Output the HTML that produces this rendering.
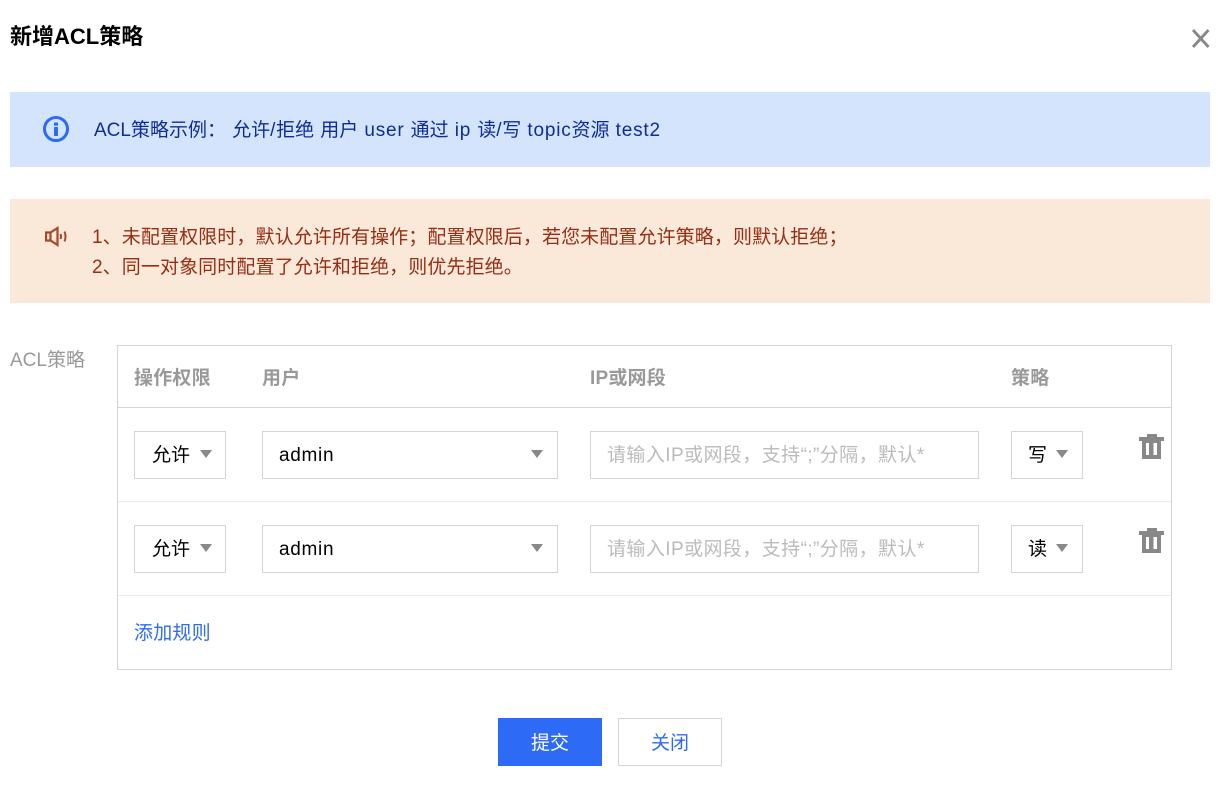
<!DOCTYPE html>
<html lang="zh"><head><meta charset="utf-8"><style>
html,body{margin:0;padding:0;background:#fff}
body{width:1230px;height:786px;position:relative;overflow:hidden;font-family:"Liberation Sans","Noto Sans CJK SC",sans-serif;font-size:19px;color:#000}
.a{position:absolute;white-space:nowrap}
.b{position:absolute;box-sizing:border-box;border:1px solid #cfd5de;background:#fff;height:48px}
.t{position:absolute;top:12.500px;line-height:22px;white-space:nowrap}
.p{letter-spacing:.42px}
.m{letter-spacing:.7px}
.c{position:absolute;top:18px;width:0;height:0;border-left:6.5px solid transparent;border-right:6.5px solid transparent;border-top:8px solid #888}
.h{position:absolute;top:368px;line-height:22px;font-weight:bold;color:#999;font-size:19px;white-space:nowrap;letter-spacing:.2px}
.l{position:absolute;background:#cfd5de}
.z{letter-spacing:0}
</style></head><body>
<div class="a" style="left:10px;top:24px;font-size:22px;font-weight:bold;line-height:26px">新增ACL策略</div>
<svg class="a" style="left:1190px;top:28px" width="21" height="21" viewBox="0 0 21 21"><path d="M3 2L18.500 19M18.500 2L3 19" stroke="#888" stroke-width="2.800"/></svg>

<div class="a" style="left:10px;top:92px;width:1200px;height:75px;background:#d5e4fd"></div>
<svg class="a" style="left:43px;top:116px" width="26" height="26" viewBox="0 0 26 26"><circle cx="13" cy="13" r="11.500" fill="none" stroke="#2d6bf6" stroke-width="3"/><rect x="11" y="6.500" width="4" height="3.200" fill="#2d6bf6"/><rect x="11" y="11" width="4" height="9" fill="#2d6bf6"/></svg>
<div class="a" style="left:94px;top:120px;line-height:22px;color:#0d2d96;font-size:19px;letter-spacing:.8px"><span class="z">ACL策略示例：</span> <span class="z">允许</span>/<span class="z">拒绝</span> <span class="z">用户</span> user <span class="z">通过</span> ip <span class="z">读</span>/<span class="z">写</span> topic<span class="z">资源</span> test2</div>

<div class="a" style="left:10px;top:199px;width:1200px;height:104px;background:#fae9d9"></div>
<svg class="a" style="left:45px;top:226px" width="24" height="21" viewBox="0 0 24 21"><path d="M1 6.500H5.500L12.500 2V19L5.500 14.500H1ZM5.500 6.500V14.500" fill="none" stroke="#a4492b" stroke-width="2.200"/><path d="M15.500 8Q16.500 10.500 15.500 13M19.500 5.500Q21.500 10.500 19.500 15.500" fill="none" stroke="#a4492b" stroke-width="2"/></svg>
<div class="a" style="left:92px;top:223px;line-height:30px;color:#972d14;font-size:19px;letter-spacing:.1px">1、未配置权限时，默认允许所有操作；配置权限后，若您未配置允许策略，则默认拒绝；<br>2、同一对象同时配置了允许和拒绝，则优先拒绝。</div>

<div class="a" style="left:10px;top:350px;line-height:22px;color:#999">ACL策略</div>
<div class="a" style="left:117px;top:345px;width:1055px;height:325px;box-sizing:border-box;border:1px solid #cfd5de"></div>
<div class="h" style="left:134px">操作权限</div>
<div class="h" style="left:262px">用户</div>
<div class="h" style="left:590px">IP或网段</div>
<div class="h" style="left:1011px">策略</div>
<div class="l" style="left:118px;top:407px;width:1053px;height:1px"></div>
<div class="l" style="left:118px;top:501px;width:1053px;height:1px;background:#e7eaef"></div>
<div class="l" style="left:118px;top:595px;width:1053px;height:1px;background:#e7eaef"></div>

<div class="b" style="left:134px;top:431px;width:92px"><span class="t" style="left:17px">允许</span><i class="c" style="left:65px"></i></div>
<div class="b" style="left:262px;top:431px;width:296px"><span class="t m" style="left:16px">admin</span><i class="c" style="left:268px"></i></div>
<div class="b" style="left:590px;top:431px;width:389px"><span class="t p" style="left:16px;color:#bbb">请输入IP或网段，支持“;”分隔，默认*</span></div>
<div class="b" style="left:1011px;top:431px;width:72px"><span class="t" style="left:16px">写</span><i class="c" style="left:44px"></i></div>
<svg class="a" style="left:1139px;top:434px" width="25" height="25" viewBox="0 0 25 25"><path fill="#888" fill-rule="evenodd" d="M8 0H18V3H25V7H22V25H3V7H0V3H8ZM7 9V21H10V9ZM14.500 9V21H18V9Z"/></svg>

<div class="b" style="left:134px;top:525px;width:92px"><span class="t" style="left:17px">允许</span><i class="c" style="left:65px"></i></div>
<div class="b" style="left:262px;top:525px;width:296px"><span class="t m" style="left:16px">admin</span><i class="c" style="left:268px"></i></div>
<div class="b" style="left:590px;top:525px;width:389px"><span class="t p" style="left:16px;color:#bbb">请输入IP或网段，支持“;”分隔，默认*</span></div>
<div class="b" style="left:1011px;top:525px;width:72px"><span class="t" style="left:16px">读</span><i class="c" style="left:44px"></i></div>
<svg class="a" style="left:1139px;top:528px" width="25" height="25" viewBox="0 0 25 25"><path fill="#888" fill-rule="evenodd" d="M8 0H18V3H25V7H22V25H3V7H0V3H8ZM7 9V21H10V9ZM14.500 9V21H18V9Z"/></svg>

<div class="a" style="left:134px;top:623px;line-height:22px;color:#2d6bf6;letter-spacing:.2px">添加规则</div>

<div class="a" style="left:498px;top:718px;width:104px;height:48px;background:#2d6bf6;color:#fff;text-align:center;line-height:51px">提交</div>
<div class="a" style="left:618px;top:718px;width:104px;height:48px;box-sizing:border-box;border:1px solid #cfd5de;color:#2d6bf6;text-align:center;line-height:49px">关闭</div>
</body></html>
